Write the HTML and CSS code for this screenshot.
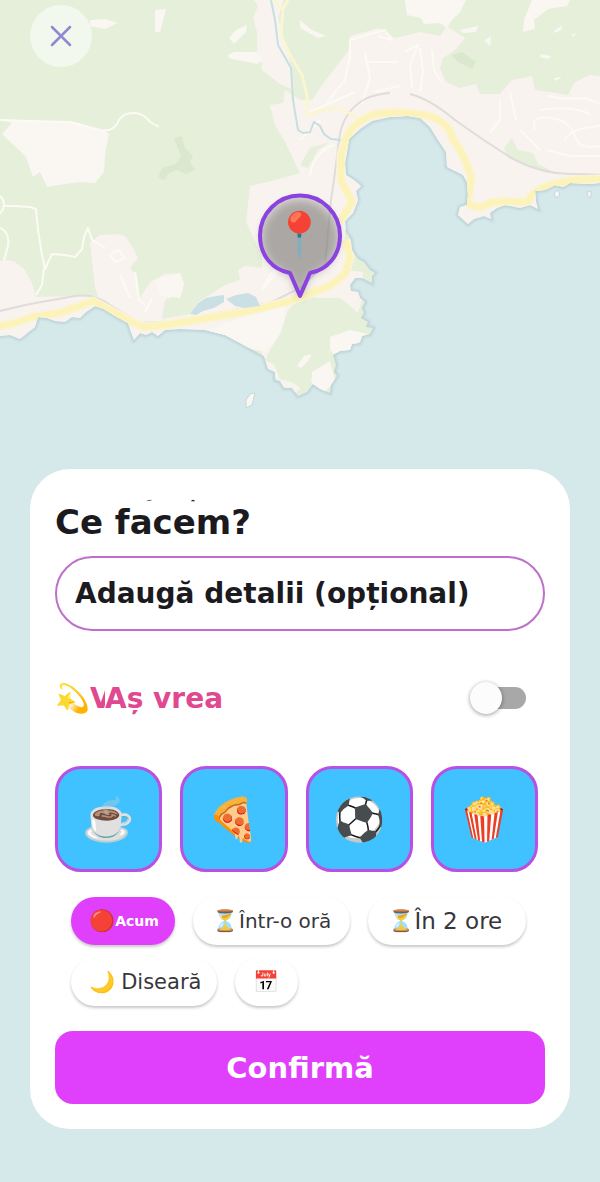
FILE: index.html
```html
<!DOCTYPE html>
<html lang="ro">
<head>
<meta charset="utf-8">
<meta name="viewport" content="width=device-width, initial-scale=1">
<title>Ce facem?</title>
<link rel="stylesheet" href="styles.css">
</head>
<body>
<div class="screen">
  <svg class="map" viewBox="0 0 600 1182" preserveAspectRatio="xMidYMin slice" aria-hidden="true">
    <defs>
      <path id="coast" d="M-10-10H610V182L590 184 570 183 563 187 555 185 545 190 535 191 536 202 538 209 530 205 520 208 505 205 497 208 490 213 491 219 484 216 474 219 468 224 458 215 460 207 467 205 468 195 467 182 463 175 455 171 447 167 446 152 438 140 430 127 420 118 408 116 390 117 372 121 360 129 349 139 347 152 345 163 346 175 354 180 361 186 356 191 358 200 353 213 345 221 346 232 351 240 352 250 358 259 364 262 370 270 375 273 372 276 372 283 366 280 362 278 355 278 350 285 351 291 358 292 360 298 365 302 362 308 364 313 361 318 368 322 366 327 373 328 370 334 362 336 360 343 352 344 350 350 340 351 333 355 336 365 334 372 337 376 331 385 330 393 320 389 313 384 307 392 298 396 292 388 284 388 280 381 275 380 275 372 268 369 264 356 258 353 240 343 225 335 205 330 180 329 165 330 158 336 152 332 146 335 140 333 134 340 131 332 128 323 115 316 104 309 95 306 86 312 80 318 72 317 65 322 55 321 47 318 38 317 35 327 25 335 20 339 10 335 -10 337Z"/>
      <clipPath id="land"><use href="#coast"/></clipPath>
      <filter id="soft" x="-30%" y="-30%" width="160%" height="160%"><feGaussianBlur stdDeviation="4"/></filter>
      <filter id="haze" x="-5%" y="-5%" width="110%" height="110%"><feGaussianBlur stdDeviation="1"/></filter>
    </defs>
    <rect class="sea" x="-10" y="-10" width="620" height="1202"/>
    <use class="shore" href="#coast" filter="url(#haze)"/>
    <use class="forest" href="#coast"/>
    <g clip-path="url(#land)">
      <g class="built">
        <path d="M-5 262 5 260 14 261 25 270 32 283 36 297 75 296 98 296 95 288 93 270 90 243 100 235 118 234 125 236 133 248 138 258 130 268 137 276 140 298 150 282 165 274 180 273 184 284 182 293 165 300 162 319 190 314 198 302 225 285 240 280 238 270 245 266 262 268 262 256 246 222 250 186 275 180 300 173 285 142 275 125 270 105 283 103 285 90 300 100 312 100 322 85 349 50 350 36 365 32 378 28 395 38 420 32 440 36 447 26 465 38 455 50 443 58 440 68 446 82 460 88 476 84 480 94 500 94 512 80 532 76 535 90 550 92 568 95 575 82 590 75 610 77V230H345V270L363 272V298L355 322 333 325 325 338 332 342 330 352 326 370 325 382 312 384 310 376 305 384 296 393 284 387 274 376 262 362V345H240L205 340 160 345 128 345 95 318 60 330 30 345H-10Z"/>
        <path d="M250-5H285L278 18 290 60 294 90 280 84 262 70 261 59 257 52 257 32 253 18 258 6Z"/>
      </g>
      <path class="field" d="M2 134 12 123 0 120 40 121 75 122 105 131 109 134 105 155 104 172 95 183 80 182 65 184 47 187 40 172 33 177 26 157 21 152Z M90 20 105 19 118 23 105 29 90 26Z M155 10 166 9 160 32 155 32Z M228 55 229 58 237 60 257 64 263 60 257 52 234 52Z M229 38 236 30 247 25 246 32 234 44Z M404-5H435L466 0 460 12 452 20 447 28 440 23 424 24 421 18 407 15Z M532 0H570L567 6 548 9 534 20 535 29 523 32 524 20Z M460 30 478 26 476 32 463 33Z M300 20 312 30 326 36 318 38 300 28Z M155 280 180 273 184 284 180 298 160 295Z M205 331 285 303 284 330 265 352 235 345Z"/>
      <path class="forest" d="M288 310 302 296 320 298 340 298 350 306 361 316 360 330 352 335 342 338 332 340 329 352 333 360 325 370 312 378 303 390 292 382 280 379 274 364 265 360 270 350 280 334Z"/>
      <path class="field" d="M297 366 304 356 312 354 308 361 301 368Z M330 337 350 330 368 334 350 350 333 354 330 348Z M312 372 330 361 335 380 325 392 312 384Z"/>
      <path class="wood" d="M174 138 182 136 185 148 193 156 190 162 195 170 186 174 176 170 168 174 165 180 158 178 162 168 176 164 181 156Z M452 55 462 52 476 62 472 69 458 62Z"/>
      <path class="forest" d="M504 148 512 138 518 150 533 153 538 164 550 170 545 172 530 165 508 158Z M300 165 310 148 330 142 318 150 308 168Z"/>
      <path class="field" d="M555 30 563 25 560 31 553 33Z M485 40 491 36 490 46 486 42Z M541 54 551 56 548 59 540 57Z M554 78 562 77 556 81Z M572 34 576 34 573 37Z"/>
      <g class="lanes">
        <path d="M0 120 30 121 70 122 100 130Q114 133 119 120 124 112 135 113 145 114 150 122L159 127"/>
        <path d="M0 196Q8 204 0 214M5 206 15 206 30 207 36 209 38 230 42 255 45 269 52 254 65 255 75 257 82 249 84 237 88 228 92 240 105 248M44 268 42 285 36 295M0 228Q10 232 8 246L4 260"/>
        <path d="M350 60V40L370 34 385 30 392 40 378 36M365 62H398M365 52 370 78 362 104M350 55 345 80 325 105M420 48 423 72 420 92M432 50 434 70 441 82M405 52 418 45 410 65 412 88M375 92 400 86M310 112 355 92"/>
        <path d="M500 100V120L490 132M510 92 516 120M548 96Q565 100 585 98L600 104M540 110Q570 105 590 114M535 130Q530 115 550 118 570 120 575 136 578 150 600 146M565 140Q570 128 600 126M548 150 570 156 600 156M520 130 540 150"/>
        <path d="M110 255 118 250 125 258 115 262ZM120 275 130 298M135 272 139 300 145 305M152 298 145 312M270 275 285 262 262 290Z"/>
        <path d="M320 120 300 140M310 175Q315 150 335 145"/>
      </g>
      <path class="rail" d="M-5 312 30 304 75 296Q95 293 110 305L140 323 180 321 270 303 300 288 325 265 331 200 334 180 339 140Q342 112 365 99 376 94 390 93M410 94Q430 99 455 120 490 145 515 160 545 175 575 174L605 175"/>
      <path class="stream" d="M270-5 275 20 278 45 291 68 293 100 298 130 303 133 310 132 314 122 320 126 324 134 331 139 341 140"/>
      <path class="minor" d="M270-3 283 8 281 35 290 55 302 75 307 95 307 115Q325 108 340 108L360 119"/>
      <path class="minor" d="M288 0 282 10"/>
      <path id="main" class="road-edge" d="M-5 327 15 323 32 317 60 313 93 301 128 320 143 327 165 325 195 320 250 311 290 301 330 286 345 274 350 258 346 240M340 222 352 202 341 180 341 155 347 137Q352 123 375 114 400 110 430 116 450 124 452 138 466 157 471 177 470 192 467 202 477 212 492 202 505 201 528 202 532 188 560 183 570 179 605 179"/>
      <path class="road" d="M-5 327 15 323 32 317 60 313 93 301 128 320 143 327 165 325 195 320 250 311 290 301 330 286 345 274 350 258 346 240M340 222 352 202 341 180 341 155 347 137Q352 123 375 114 400 110 430 116 450 124 452 138 466 157 471 177 470 192 467 202 477 212 492 202 505 201 528 202 532 188 560 183 570 179 605 179"/>
      <path class="lagoon" d="M190 314 198 303 206 298 216 296 224 295 224 302 214 308 203 311 196 315ZM226 299 236 295 248 293 256 297 260 306 245 308 235 306Z"/>
    </g>
    <path class="islet" d="M246 400 250 394 255 393 252 405 246 408Z"/>
    <path class="islet" d="M554 193 558 190 560 195 556 198ZM587 192 591 191 591 198 588 196Z"/>
    <g>
      <path class="pin-shadow" d="M300 299 290 275A38 38 0 1 1 310 275Z" filter="url(#soft)"/>
      <path class="pin" d="M300 296 290 273C273 270 260 256 260 235.500A40 40 0 1 1 340 235.500C340 256 327 270 310 273Z"/>
      <text class="pin-emoji" x="300" y="250">📍</text>
    </g>
  </svg>

  <header class="top">
    <button class="close" type="button" aria-label="Închide">
      <svg viewBox="0 0 24 24" aria-hidden="true"><path d="M3 3 21 21M21 3 3 21"/></svg>
    </button>
  </header>

  <main class="card">
    <svg class="trace" viewBox="0 0 70 4" aria-hidden="true"><path d="M0 3Q3 1 8 1L7 2ZM60 3Q63-1 66 3Z"/></svg>
    <h1 class="title">Ce facem?</h1>
    <input class="details" type="text" placeholder="Adaugă detalii (opțional)" aria-label="Adaugă detalii (opțional)">

    <div class="wish">
      <label class="wish-label" for="wish"><span class="emoji">💫</span><span class="cut" aria-hidden="true">V</span>Aș vrea</label>
      <input class="switch" id="wish" type="checkbox" role="switch">
    </div>

    <div class="tiles">
      <button class="tile emoji" type="button" aria-label="Cafea">☕</button>
      <button class="tile emoji" type="button" aria-label="Pizza">🍕</button>
      <button class="tile emoji" type="button" aria-label="Fotbal">⚽</button>
      <button class="tile emoji" type="button" aria-label="Film">🍿</button>
    </div>

    <div class="times">
      <button class="chip chip-on" type="button"><span class="emoji">🔴</span>Acum</button>
      <button class="chip chip-hour" type="button"><span class="emoji">⏳</span>Într-o oră</button>
      <button class="chip chip-two" type="button"><span class="emoji">⏳</span>În 2 ore</button>
      <button class="chip chip-night" type="button"><span class="emoji">🌙</span>Diseară</button>
      <button class="chip" type="button" aria-label="Alege data"><span class="emoji">📅</span></button>
    </div>

    <button class="confirm" type="button">Confirmă</button>
  </main>
</div>
</body>
</html>
```
FILE: styles.css
```css
* {
  box-sizing: border-box;
}

body {
  margin: 0;
  background: #d5e8ea;
  color: #1b1b1f;
  font-family: "DejaVu Sans", sans-serif;
}

button,
input {
  margin: 0;
  font-family: inherit;
  color: inherit;
}

.emoji {
  font-family: "Noto Color Emoji", sans-serif;
  font-weight: 400;
}

.screen {
  position: relative;
  display: flex;
  flex-direction: column;
  justify-content: space-between;
  min-height: 100vh;
  padding: 5px 30px 53px;
}

/* Map */
.map {
  position: absolute;
  inset: 0;
  width: 100%;
  height: 100%;
}

.sea { fill: #d5e8ea; }
.shore { fill: none; stroke: #bdd4d9; stroke-width: 4; }
.forest { fill: #e5efda; }
.built { fill: #f8f3ee; }
.field { fill: #faf7f2; }
.wood { fill: #dae9cd; }
.lanes { fill: none; stroke: #fcfbf3; stroke-width: 2; stroke-linejoin: round; }
.rail { fill: none; stroke: #e0dcdb; stroke-width: 2; }
.stream { fill: none; stroke: #c8dfe1; stroke-width: 2; }
.lagoon { fill: #cbe0e5; }
.minor { fill: none; stroke: #fbf6d2; stroke-width: 3; }
.road-edge { fill: none; stroke: #fbf3d6; stroke-width: 9; stroke-linejoin: round; }
.road { fill: none; stroke: #fcf3ba; stroke-width: 6; stroke-linejoin: round; }
.islet { fill: #faf7f2; stroke: #c3d8dc; stroke-width: 1; }
.pin-shadow { fill: #6f706d; opacity: .5; }
.pin { fill: #8f8d8c; fill-opacity: .25; stroke: #8a42e0; stroke-width: 4; stroke-linejoin: round; }
.pin-emoji { font-family: "Noto Color Emoji", sans-serif; font-size: 44px; text-anchor: middle; }

/* Close */
.top {
  position: relative;
  display: flex;
}

.close {
  display: grid;
  place-items: center;
  width: 62px;
  height: 62px;
  padding: 0;
  border: 0;
  border-radius: 50%;
  background: #f3f8ee;
}

.close svg {
  width: 24px;
  fill: none;
  stroke: #9189cf;
  stroke-width: 2.500;
  stroke-linecap: round;
}

/* Card */
.card {
  position: relative;
  display: flex;
  flex-direction: column;
  padding: 30px 25px 25px;
  border-radius: 40px;
  background: #fff;
}

.trace {
  width: 70px;
  height: 3px;
  margin-left: 82px;
  fill: #1b1b1f;
}

.title {
  margin: 0 0 14px;
  font-size: 34px;
  line-height: 40px;
}

.details {
  width: 100%;
  height: 75px;
  padding: 0 18px;
  border: 2px solid #bd6fca;
  border-radius: 38px;
  background: #fff;
  font-size: 28px;
  font-weight: 700;
}

.details::placeholder {
  color: inherit;
  opacity: 1;
}

.wish {
  display: flex;
  align-items: center;
  justify-content: space-between;
  height: 48px;
  margin: 43px 19px 44px 0;
}

.wish-label {
  display: flex;
  align-items: center;
  color: #e0488f;
  font-size: 28px;
  font-weight: 700;
}

.wish-label .emoji {
  width: 35px;
}

.cut {
  width: 15px;
  overflow: hidden;
}

.switch {
  position: relative;
  width: 56px;
  height: 32px;
  appearance: none;
}

.switch::before {
  content: "";
  position: absolute;
  inset: 5px 0 5px 4px;
  border-radius: 11px;
  background: #a8a8a8;
}

.switch::after {
  content: "";
  position: absolute;
  top: 0;
  left: 0;
  width: 32px;
  height: 32px;
  border-radius: 50%;
  background: #fcfcfc;
  box-shadow: 0 1px 4px rgb(0 0 0 / 40%);
}

.switch:checked::after {
  left: 24px;
}

.tiles {
  display: grid;
  grid-template-columns: repeat(4, 1fr);
  gap: 18px;
  margin: 0 7px 25px 0;
}

.tile {
  height: 106px;
  padding: 0;
  border: 3px solid #b94fe3;
  border-radius: 26px;
  background: #3fc2ff;
  font-size: 42px;
}

.times {
  display: flex;
  flex-wrap: wrap;
  gap: 13px 18px;
  margin: 0 8px 25px 16px;
}

.chip {
  display: flex;
  align-items: center;
  height: 48px;
  padding: 0 18px;
  border: 0;
  border-radius: 24px;
  background: #fff;
  color: #37373b;
  box-shadow: 0 2px 3px rgb(0 0 0 / 22%);
}

.chip .emoji {
  font-size: 21px;
}

.chip-on {
  padding: 0 16px 0 18px;
  background: #e040fb;
  color: #fff;
  font-size: 14px;
  font-weight: 700;
}

.chip-hour { padding: 0 19px 0 20px; font-size: 20px; }
.chip-two { padding: 0 24px 0 20px; font-size: 23px; }
.chip-night { gap: 6px; padding: 0 16px 0 18px; font-size: 21px; }

.confirm {
  height: 73px;
  padding: 0;
  border: 0;
  border-radius: 18px;
  background: #e040fb;
  color: #fff;
  font-size: 29px;
  font-weight: 700;
}
```
